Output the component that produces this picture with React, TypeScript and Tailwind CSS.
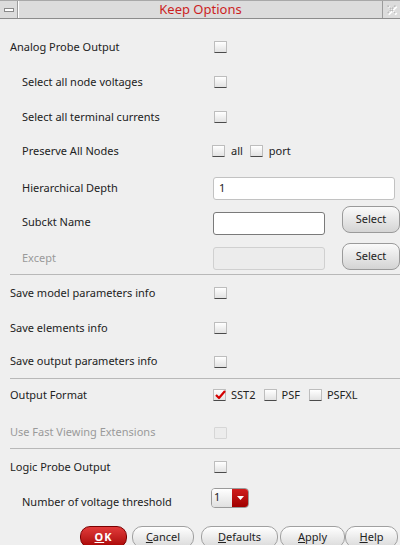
import React from "react";

const font = { fontFamily: '"Noto Sans", "DejaVu Sans", sans-serif' };

function Check({ checked = false, disabled = false }: { checked?: boolean; disabled?: boolean }) {
  return (
    <div
      className={
        "relative w-[13px] h-[12px] rounded-[1px] border " +
        (disabled
          ? "border-[#d6d6d6] bg-[#ececec]"
          : "border-[#bdbdbd] border-b-[#4a4a4a] bg-gradient-to-b from-white to-[#e2e2e2]")
      }
    >
      {checked && (
        <svg className="absolute left-[1px] top-[0px]" width="11" height="10" viewBox="0 0 11 10">
          <path d="M1 5 L4 8 L10 1" stroke="#d40000" strokeWidth="2.2" fill="none" strokeLinejoin="round" />
        </svg>
      )}
    </div>
  );
}

function Row({ h, children, indent = false, extra = "" }: { h: string; children: React.ReactNode; indent?: boolean; extra?: string }) {
  return <div className={`${h} ${extra} flex items-center ${indent ? "pl-[12px]" : ""}`}>{children}</div>;
}

function Label({ children, w, disabled = false }: { children: React.ReactNode; w: string; disabled?: boolean }) {
  return <div className={`${w} shrink-0 ${disabled ? "text-[#9a9a9a]" : "text-[#222]"}`}>{children}</div>;
}

function SelBtn({ up = false }: { up?: boolean }) {
  return (
    <div
      className={`ml-[17px] w-[58px] h-[27px] rounded-[8px] border border-[#9a9a9a] bg-gradient-to-b from-[#fafafa] to-[#d4d4d4] flex items-center justify-center text-[#222] ${up ? "-mt-[5px]" : "-mt-[4px]"}`}
    >
      Select
    </div>
  );
}

function BottomBtn({ children, w, red = false }: { children: React.ReactNode; w: string; red?: boolean }) {
  return (
    <div
      className={
        `${w} h-[22px] rounded-[10px] border flex items-start pt-[2px] justify-center shrink-0 ` +
        (red
          ? "border-[#7a0000] bg-gradient-to-b from-[#e23a3a] to-[#a80000] text-white font-bold tracking-[1px]"
          : "border-[#a0a0a0] bg-gradient-to-b from-white to-[#dadada] text-[#222]")
      }
    >
      {children}
    </div>
  );
}

export default function App() {
  return (
    <div className="w-[400px] h-[545px] overflow-hidden bg-[#efefef] text-[11px] relative" style={font}>
      {/* title bar */}
      <div className="h-[19px] flex border-t border-[#a8a8a8] border-b border-b-[#8c8c8c] bg-[#dcdcdc]">
        <div className="w-[18px] border-r border-[#9c9c9c] flex items-center justify-center">
          <div className="w-[10px] h-[4px] bg-white border border-[#8a8a8a] mt-[1px]" />
        </div>
        <div className="flex-1 flex items-center justify-center text-[13px] text-[#cc1f1f] border-l border-white">
          Keep Options
        </div>
        <div className="w-[18px] border-l border-[#9c9c9c] flex items-center justify-center">
          <svg width="12" height="12" viewBox="0 0 12 12">
            <path d="M2.5 2.5 L10.5 10.5 M10.5 2.5 L2.5 10.5" stroke="#ffffff" strokeWidth="2.4" fill="none" />
            <path d="M1.5 1.5 L9.5 9.5 M9.5 1.5 L1.5 9.5" stroke="#bcbcbc" strokeWidth="1.6" fill="none" strokeDasharray="2 1" />
          </svg>
        </div>
      </div>

      <div className="pl-[10px] pt-[11px]">
        <Row h="h-[34px]">
          <Label w="w-[204px]">Analog Probe Output</Label>
          <Check />
        </Row>
        <Row h="h-[36px]" indent>
          <Label w="w-[192px]">Select all node voltages</Label>
          <Check />
        </Row>
        <Row h="h-[34px]" indent>
          <Label w="w-[192px]">Select all terminal currents</Label>
          <Check />
        </Row>
        <Row h="h-[34px]" indent>
          <Label w="w-[190px]">Preserve All Nodes</Label>
          <Check />
          <span className="ml-[6px] text-[#222]">all</span>
          <div className="ml-[7px]">
            <Check />
          </div>
          <span className="ml-[6px] text-[#222]">port</span>
        </Row>
        <Row h="h-[40px]" indent>
          <Label w="w-[191px]">Hierarchical Depth</Label>
          <div className="w-[182px] h-[23px] bg-white border border-[#c2c2c2] rounded-[3px] flex items-center pl-[5px] text-[#222]">
            1
          </div>
        </Row>
        <Row h="h-[28px]" indent>
          <Label w="w-[191px]">Subckt Name</Label>
          <div className="w-[112px] h-[23px] bg-white border border-[#7a7a7a] rounded-[3px] mt-[2px]" />
          <SelBtn up />
        </Row>
        <Row h="h-[32px]" indent extra="mt-[6px]">
          <Label w="w-[191px]" disabled>
            Except
          </Label>
          <div className="w-[112px] h-[23px] bg-[#ececec] border border-[#d0d0d0] rounded-[3px]" />
          <SelBtn />
        </Row>
        <div className="h-[1px] bg-[#b8b8b8]" />
        <Row h="h-[36px]">
          <Label w="w-[204px]">Save model parameters info</Label>
          <Check />
        </Row>
        <Row h="h-[34px]">
          <Label w="w-[204px]">Save elements info</Label>
          <Check />
        </Row>
        <Row h="h-[33px]">
          <Label w="w-[204px]">Save output parameters info</Label>
          <Check />
        </Row>
        <div className="h-[1px] bg-[#b8b8b8]" />
        <Row h="h-[32px]">
          <Label w="w-[203px]">Output Format</Label>
          <Check checked />
          <span className="ml-[5px] text-[#222]">SST2</span>
          <div className="ml-[8px]">
            <Check />
          </div>
          <span className="ml-[5px] text-[#222]">PSF</span>
          <div className="ml-[9px]">
            <Check />
          </div>
          <span className="ml-[5px] text-[#222]">PSFXL</span>
        </Row>
        <Row h="h-[37px]" extra="pt-[6px]">
          <Label w="w-[204px]" disabled>
            Use Fast Viewing Extensions
          </Label>
          <Check disabled />
        </Row>
        <div className="h-[1px] bg-[#b8b8b8]" />
        <Row h="h-[36px]">
          <Label w="w-[204px]">Logic Probe Output</Label>
          <Check />
        </Row>
        <Row h="h-[34px]" indent>
          <Label w="w-[189px]">Number of voltage threshold</Label>
          <div className="w-[38px] h-[20px] rounded-[4px] border border-[#9a9a9a] flex overflow-hidden mb-[9px]">
            <div className="flex-1 bg-gradient-to-b from-white to-[#e0e0e0] flex items-center pl-[2px] text-[#222]">1</div>
            <div className="w-[16px] bg-gradient-to-b from-[#d01c1c] to-[#a00000] flex items-center justify-center">
              <svg width="7" height="4" viewBox="0 0 7 4">
                <path d="M0 0 L7 0 L3.5 4 Z" fill="white" />
              </svg>
            </div>
          </div>
        </Row>
      </div>

      <div className="absolute left-0 top-[526px] w-[400px] flex pl-[80px]">
        <BottomBtn w="w-[47px]" red>
          <span>
            <span className="underline">O</span>K
          </span>
        </BottomBtn>
        <div className="ml-[5px]">
          <BottomBtn w="w-[62px]">
            <span>
              <span className="underline">C</span>ancel
            </span>
          </BottomBtn>
        </div>
        <div className="ml-[7px]">
          <BottomBtn w="w-[77px]">
            <span>
              <span className="underline">D</span>efaults
            </span>
          </BottomBtn>
        </div>
        <div className="ml-[2px]">
          <BottomBtn w="w-[65px]">
            <span>
              <span className="underline">A</span>pply
            </span>
          </BottomBtn>
        </div>
        <BottomBtn w="w-[53px]">
          <span>
            <span className="underline">H</span>elp
          </span>
        </BottomBtn>
      </div>
    </div>
  );
}
